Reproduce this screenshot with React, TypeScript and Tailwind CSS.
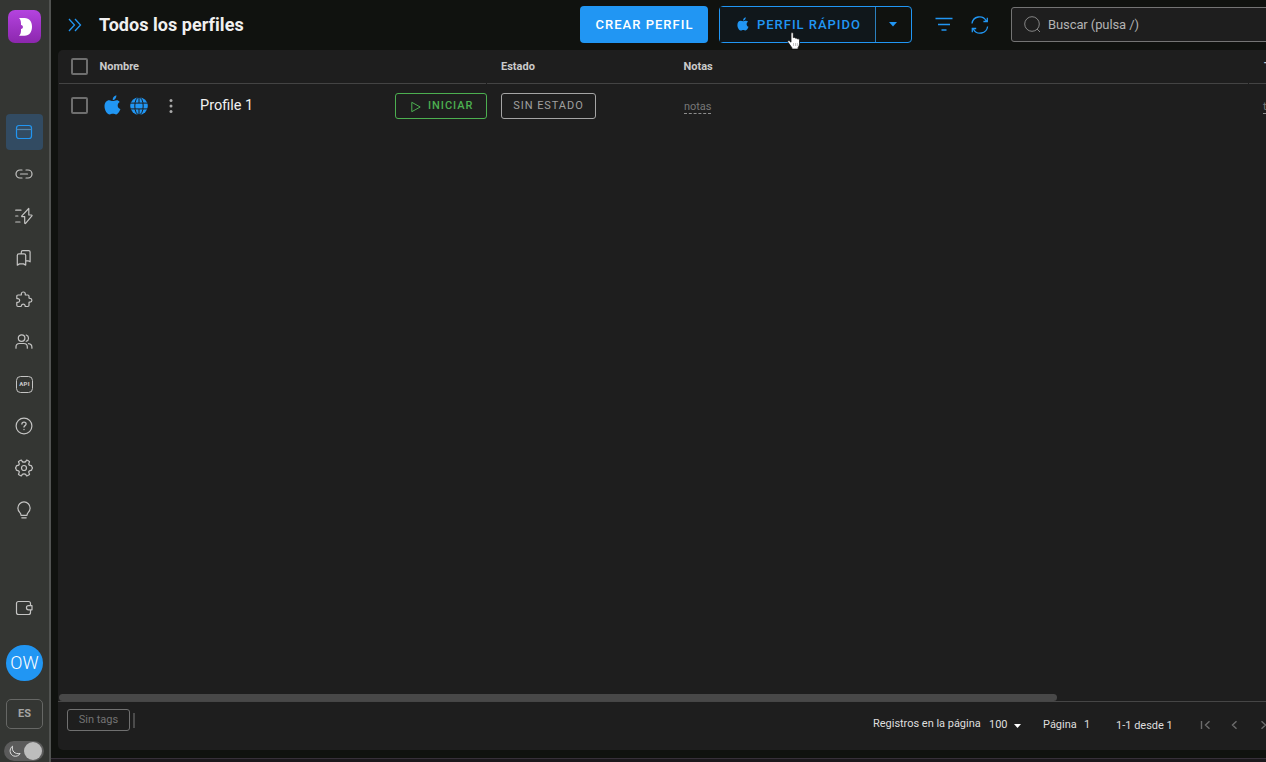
import type { ReactNode } from 'react';

function Icon({ children, size = 18 }: { children: ReactNode; size?: number }) {
  return (
    <svg width={size} height={size} viewBox={`0 0 ${size} ${size}`} fill="none" stroke="currentColor" strokeWidth="1.2" strokeLinecap="round" strokeLinejoin="round" className="shrink-0">
      {children}
    </svg>
  );
}

const navIcons: { id: string; icon: ReactNode }[] = [
  {
    id: 'links',
    icon: (
      <Icon>
        <path d="M7 5H5a4 4 0 0 0 0 8h2M11 5h2a4 4 0 0 1 0 8h-2M5.5 9h7" />
      </Icon>
    ),
  },
  {
    id: 'automation',
    icon: (
      <Icon>
        <path d="M.7 3.2H6M.7 9h2.2M.7 15H5M13.7 1.500 6.8 8.800c-.3.4-.1.9.4.9h2.500v6.300c0 .5.6.7.9.3l6.300-7.400c.3-.4.1-.9-.4-.9h-2.700V2c0-.4-.1-.5-.1-.5Z" />
      </Icon>
    ),
  },
  {
    id: 'bookmarks',
    icon: (
      <Icon>
        <path d="M2.300 6.400c0-1.100.6-1.600 1.600-1.600h5.200c1 0 1.600.5 1.600 1.600v9.700l-2.200-1.200h-4l-2.200 1.200ZM6.300 4.500V3c0-.9.6-1.400 1.500-1.400h5.800c1 0 1.500.6 1.500 1.500v9.700l-2-1h-2.300" />
      </Icon>
    ),
  },
  {
    id: 'extensions',
    icon: (
      <Icon>
        <path d="M3 4h3c.6 0 .3-.7.3-1a2 2 0 0 1 4 0c0 .4-.3 1 .3 1h2.200c.8 0 1.200.4 1.200 1.200v1.600c0 .6.6.5 1 .5a1.900 1.900 0 0 1 0 3.800c-.5 0-1-.1-1 .5v2.700c0 .8-.4 1.200-1.200 1.200h-2.300c-.5 0-.4-.6-.4-1a1.900 1.900 0 0 0-3.700 0c0 .5 0 1-.6 1H3c-.8 0-1.200-.4-1.200-1.200v-2.500c0-.6.6-.4 1-.4a1.800 1.800 0 0 0 0-3.700c-.5 0-1 .1-1-.5v-2C1.800 4.400 2.200 4 3 4Z" />
      </Icon>
    ),
  },
  {
    id: 'team',
    icon: (
      <Icon>
        <circle cx="6.600" cy="5.100" r="3.300" />
        <path d="M1 15.200v-1.500c0-2 1.500-3.200 3.500-3.200h4.300c2 0 3.500 1.200 3.500 3.200v1.500M11.200 2a3.300 3.300 0 0 1 0 6.300M13.500 10.700c2.200.3 3.400 1.600 3.400 3.500v1" />
      </Icon>
    ),
  },
  {
    id: 'api',
    icon: (
      <span className="flex h-[17px] w-[17px] items-center justify-center rounded-[4.5px] border border-[#c4c4c3] pl-px text-[6px] font-black leading-none tracking-[0.3px]">API</span>
    ),
  },
  {
    id: 'help',
    icon: (
      <Icon>
        <circle cx="9" cy="9" r="7.900" />
        <path d="M6.900 7.100c0-1.200.9-1.900 2.100-1.900s2.100.8 2.100 1.900c0 1.500-2.100 1.500-2.100 3M9 12.500v.1" strokeWidth="1.300" />
      </Icon>
    ),
  },
  {
    id: 'settings',
    icon: (
      <Icon>
        <circle cx="9" cy="9" r="2.500" />
        <path d="M7.200 2.500 6.700 1.500c-.2-.4-.6-.5-1-.3L3.900 2.200c-.4.2-.5.6-.3 1l.5 1.100c.4.900-.1 1.900-1.100 2.100l-1.100.2c-.5.1-.7.4-.7.8v.5L.4 9l.8 1.100v.5c0 .4.200.7.700.8l1.100.2c1 .2 1.500 1.200 1.100 2.100l-.5 1.100c-.2.4-.1.8.3 1l1.800 1c.4.2.8.1 1-.3l.5-1c.8-.9 2.800-.9 3.600 0l.5 1c.2.4.6.5 1 .3l1.800-1c.4-.2.5-.6.3-1l-.5-1.100c-.4-.9.1-1.900 1.100-2.100l1.100-.2c.5-.1.7-.4.7-.8v-.5l.8-1.100-.8-1.100v-.5c0-.4-.2-.7-.7-.8l-1.100-.2c-1-.2-1.500-1.200-1.100-2.100l.5-1.100c.2-.4.1-.8-.3-1l-1.800-1c-.4-.2-.8-.1-1 .3l-.5 1c-.8.9-2.800.9-3.600 0Z" />
      </Icon>
    ),
  },
  {
    id: 'tips',
    icon: (
      <Icon>
        <path d="M6 14.300c0-1.400-.3-1.900-1.300-2.900a6.100 6.100 0 1 1 8.600 0c-1 1-1.300 1.500-1.300 2.900ZM6.800 16.800h4.400" />
      </Icon>
    ),
  },
];

function Apple({ className }: { className: string }) {
  return (
    <svg viewBox="0 0 17 20" fill="currentColor" className={className}>
      <path d="M8.700 5.200C8.500 2.700 9.900.8 12.400.2c.1 2.500-1.300 4.600-3.700 5ZM15.700 6.900c-1.400.9-2 2-2 3.500 0 1.700.9 3 2.700 3.700-.8 2.400-2.500 5.300-4.300 5.300-1.200 0-1.700-.7-3.200-.7s-2.100.7-3.200.7C3.300 19.400.5 15.500.5 11.300.5 7.500 2.700 5.300 5.200 5.300c1.400 0 2.500.8 3.500.8s2.300-.9 4-.9c1.200 0 2.300.6 3 1.700Z" />
    </svg>
  );
}

function Globe() {
  return (
    <svg width="18" height="18" viewBox="0 0 18 18" className="shrink-0">
      <circle cx="9" cy="9" r="8.800" fill="#2196f3" />
      <g fill="none" stroke="#1e1e1e" strokeWidth="1">
        <ellipse cx="9" cy="9" rx="4.200" ry="8.900" />
        <path d="M0 6.100h18M0 11.900h18M9 0v6M9 12v6" />
      </g>
    </svg>
  );
}

function Checkbox() {
  return <span className="h-[17px] w-[17px] shrink-0 rounded-[2px] border-2 border-[#6e6e6e]" />;
}

function Sidebar() {
  return (
    <aside className="flex h-full w-[51px] shrink-0 flex-col items-start border-r-2 border-[#515351] bg-[#343633] pl-[6px] text-[#c4c4c3]">
      <div className="ml-[2px] mt-[10px] flex h-[33px] w-[33px] shrink-0 items-center justify-center rounded-[7px] bg-linear-to-b from-[#b443df] to-[#8c27ae]">
        <svg width="33" height="33" viewBox="0 0 33 33">
          <path d="M11 8h5.500c5 0 7.500 3.600 7.500 8.700s-2.500 9-7.500 9H11c1.500-1 2-2.600 2-5.600v-1.200c1.500-.2 1.900-1 1.900-2s-.4-1.800-1.900-2v-1.500c0-2.500-.6-4.300-2-5.400Z" fill="white" />
        </svg>
      </div>
      <nav className="mt-[71px] flex flex-col gap-[6px]">
        <a className="flex h-9 w-[37px] items-center justify-center rounded-[4px] bg-[#324b62] pr-px text-[#2196f3]">
          <svg width="18" height="18" viewBox="0 0 18 18" fill="none" stroke="currentColor" strokeWidth="1.200">
            <rect x="1.500" y="2.500" width="15" height="13" rx="2.500" />
            <path d="M1.500 6.500h15" stroke="#5585aa" />
          </svg>
        </a>
        {navIcons.map((item) => (
          <a key={item.id} className="flex h-9 w-[36px] items-center justify-center">
            {item.icon}
          </a>
        ))}
      </nav>
      <a className="mt-[62px] flex h-9 w-[36px] shrink-0 items-center justify-center">
        <Icon>
          <path d="M15.500 6.500V4.500c0-1.200-.8-2-2-2h-10c-1.200 0-2 .8-2 2v9c0 1.200.8 2 2 2h10c1.200 0 2-.8 2-2v-2M13.500 6.700H17v4.100h-3.500a2 2 0 0 1 0-4.100Z" />
        </Icon>
      </a>
      <div className="mt-[19px] flex h-[36px] w-[37px] shrink-0 items-center justify-center rounded-full bg-[#2196f3] pb-[2px] text-[18px] font-light text-white">OW</div>
      <div className="mt-[18px] flex h-[30px] w-[37px] shrink-0 items-center justify-center rounded-[5px] border border-[#666765] text-[11px] font-bold text-[#a4a5a3]">ES</div>
      <div className="-ml-[2px] mt-[12px] flex h-[20px] w-[40px] shrink-0 items-center justify-between rounded-full bg-[#5b5b5b] pl-[5px] pr-[2px]">
        <svg width="12" height="12" viewBox="0 0 12 12" fill="none" stroke="#e0e0e0" strokeWidth="1">
          <path d="M3.500 1.200C-.2 3.800.5 9.600 4.700 11c2.500.8 5.200-.3 6.400-2.500C5.800 9.400 2.500 6.200 3.500 1.200Z" />
        </svg>
        <span className="h-[18px] w-[18px] rounded-full bg-[#bdbdbd]" />
      </div>
    </aside>
  );
}

function Header() {
  return (
    <header className="relative flex h-[50px] shrink-0 items-center pb-px text-[#2196f3]">
      <svg width="14" height="14" viewBox="0 0 14 14" fill="none" stroke="currentColor" strokeWidth="1.300" className="ml-[17px] shrink-0">
        <path d="m1 1 5.500 6L1 13M7 1l5.500 6L7 13" />
      </svg>
      <h1 className="ml-[17px] w-[481px] shrink-0 text-[18px] font-bold leading-[24px] tracking-[0.04px] text-[#f0f0f0]">Todos los perfiles</h1>
      <button className="h-[37px] w-[128px] shrink-0 rounded-[4px] bg-[#2196f3] pl-px text-[13px] font-medium tracking-[1.02px] text-white">CREAR PERFIL</button>
      <div className="ml-[11px] flex h-[37px] w-[193px] shrink-0 rounded-[4px] border border-[#2196f3]">
        <button className="flex w-[155px] shrink-0 items-center bg-[#10171b] pl-[17px] text-[13px] font-medium tracking-[0.98px]">
          <Apple className="mb-[2px] mr-[8px] h-[14px] w-[12px] shrink-0" />
          <span className="whitespace-nowrap">PERFIL RÁPIDO</span>
        </button>
        <button className="flex flex-1 items-center justify-center border-l border-[#2b80bd] pr-px">
          <svg width="8" height="5" viewBox="0 0 8 5" fill="currentColor">
            <path d="M0 0h8L4 4.500Z" />
          </svg>
        </button>
      </div>
      <svg width="18" height="14" viewBox="0 0 18 14" fill="none" stroke="currentColor" strokeWidth="1.400" className="mb-[2px] ml-[23px] shrink-0">
        <path d="M.5 1.500h17M3 7.500h12M6.500 13h5" />
      </svg>
      <svg width="18" height="18" viewBox="0 0 18 18" fill="none" stroke="currentColor" strokeWidth="1.300" className="ml-[18px] shrink-0">
        <path d="M1 7.500a7.600 7.600 0 0 1 14.200-2.700M16.600 10.500a7.600 7.600 0 0 1-14.200 2.700M16.300 1.800v3.700h-3.900M1.300 16.200v-3.700h3.900" />
      </svg>
      <div className="ml-[22px] flex h-[35px] w-[300px] shrink-0 items-center rounded-[3px] border border-[#747474] bg-[#1e1e1e] text-[#b3b3b3]">
        <svg width="17" height="17" viewBox="0 0 17 17" fill="none" stroke="#858585" className="ml-[12px]">
          <circle cx="8" cy="8" r="7.300" />
          <path d="m13 13 3 3" />
        </svg>
        <span className="ml-[7px] text-[13px] tracking-[-0.1px]">Buscar (pulsa /)</span>
      </div>
      <svg width="14" height="18" viewBox="0 0 14 18" className="absolute left-[736px] top-[32px]">
        <path d="M4 1.700c0-1.600 2.300-1.600 2.300 0v4c.6-.6 1.800-.4 2 .5.700-.5 1.800-.2 2 .7 1-.4 2.200.1 2.200 1.300v3.500c0 2-.9 3-1.400 3.800v1.600H4.900v-1.300C3.500 14.200 2.500 12 1 10.300.1 9.100 1.400 8 2.600 8.900L4 10.200Z" fill="white" stroke="#111" strokeWidth=".8" />
        <path d="M6.500 11v3M8.500 11v3M10.300 11v3" stroke="#888" strokeWidth=".5" />
      </svg>
    </header>
  );
}

function TableHead() {
  return (
    <div className="flex h-[34px] shrink-0 gap-px pl-px text-[11px] font-bold text-[#cacaca]">
      <div className="flex w-[427px] shrink-0 items-center border-b border-[#444] pl-[12px]">
        <Checkbox />
        <span className="ml-[11.500px] mt-px">Nombre</span>
      </div>
      <div className="flex w-[761px] shrink-0 items-center border-b border-[#444] pl-[14px] pt-px">
        <span className="w-[182.500px] shrink-0">Estado</span>
        <span>Notas</span>
      </div>
      <div className="flex w-[100px] shrink-0 items-center border-b border-[#444] pl-[15px] pt-px">Tags</div>
    </div>
  );
}

function ProfileRow() {
  return (
    <div className="flex h-[42px] shrink-0 items-center pl-[13px]">
      <Checkbox />
      <Apple className="mb-px ml-[15.500px] h-[20px] w-[17px] shrink-0 text-[#2196f3]" />
      <span className="ml-[9.500px] mt-[2px] shrink-0"><Globe /></span>
      <svg width="4" height="16" viewBox="0 0 4 16" fill="#a9a9a9" className="ml-[21px] mt-[2px] shrink-0">
        <circle cx="2" cy="2.500" r="1.500" />
        <circle cx="2" cy="8" r="1.500" />
        <circle cx="2" cy="13.500" r="1.500" />
      </svg>
      <span className="ml-[27px] mt-[2px] w-[195px] shrink-0 text-[14.500px] text-[#f1f1f1]">Profile 1</span>
      <button className="mt-[2px] flex h-[26px] w-[92px] shrink-0 items-center rounded-[3px] border border-[#4caf50] pl-[15px] text-[11px] font-medium tracking-[0.95px] text-[#4caf50]">
        <svg width="10" height="12" viewBox="0 0 10 12" fill="none" stroke="currentColor" className="mr-[7px] mt-px">
          <path d="M.8 1.300v9.400L9.200 6Z" />
        </svg>
        INICIAR
      </button>
      <button className="ml-[14px] mt-[2px] h-[26px] w-[95px] shrink-0 rounded-[3px] border border-[#a5a5a5] text-[11px] tracking-[0.93px] text-[#a0a0a0]">SIN ESTADO</button>
      <span className="ml-[88px] mt-[4px] h-[14px] w-[27px] shrink-0 border-b border-dashed border-[#8d8d8d] text-[11px] leading-[14px] tracking-[-0.05px] text-[#777]">notas</span>
      <span className="ml-[552px] mt-[4px] h-[14px] shrink-0 border-b border-dashed border-[#8d8d8d] text-[11px] leading-[14px] text-[#777]">tags</span>
    </div>
  );
}

function Footer() {
  return (
    <footer className="flex h-[49px] shrink-0 items-center border-t border-[#464646] pl-[9px] text-[11px] text-[#dedede]">
      <span className="mb-[12px] flex h-[22px] w-[63px] shrink-0 items-center justify-center rounded-[3px] border border-[#707070] text-[#737373]">Sin tags</span>
      <span className="mb-[12px] ml-[3px] h-[15px] w-[2px] shrink-0 bg-[#4b4b4b]" />
      <span className="mb-[4px] ml-[738px] w-[116px] shrink-0 tracking-[-0.02px]">Registros en la página</span>
      <span className="mb-[2px] w-[25px] shrink-0">100</span>
      <svg width="7" height="4" viewBox="0 0 7 4" fill="white" className="mb-px shrink-0"><path d="M0 0h7L3.500 4Z" /></svg>
      <span className="mb-[2px] ml-[22px] w-[41px] shrink-0">Página</span>
      <span className="mb-[2px] w-[32px] shrink-0">1</span>
      <span className="w-[84px] shrink-0">1-1 desde 1</span>
      <svg width="70" height="10" viewBox="0 0 70 10" fill="none" stroke="#6c6c6c" strokeWidth="1.400" className="mb-[2px] shrink-0">
        <path d="M1.500 1v8M9.500 1.200 5.500 5l4 3.800M36.500 1.200 32.500 5l4 3.800M61.500 1.200 65.500 5l-4 3.800" />
      </svg>
    </footer>
  );
}

export default function App() {
  return (
    <div className="flex h-[762px] w-[1266px] overflow-hidden bg-[#10120f] font-[Roboto,sans-serif] antialiased">
      <Sidebar />
      <main className="flex min-w-0 flex-1 flex-col">
        <Header />
        <section className="ml-[7px] flex h-[700px] flex-col overflow-hidden rounded-l-[5px] bg-[#1e1e1e]">
          <TableHead />
          <ProfileRow />
          <div className="flex-1" />
          <div className="ml-px h-[7px] w-[998px] shrink-0 rounded-full bg-[#484848]" />
          <Footer />
        </section>
        <div className="mt-[8px] h-[4px] border-t border-[#37303a] bg-[#1b181c]" />
      </main>
    </div>
  );
}
